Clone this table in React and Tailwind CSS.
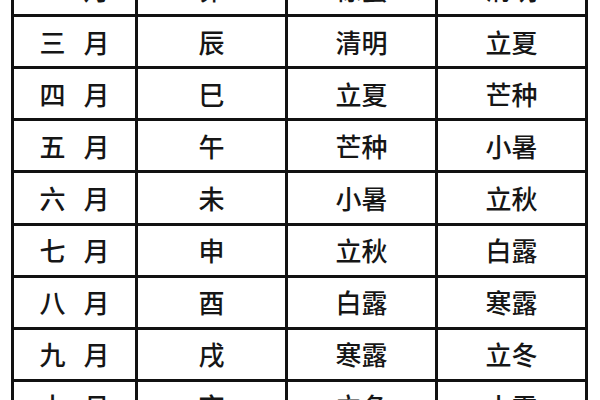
import React from "react";

const rows = [
  ["二", "卯", "惊蛰", "清明"],
  ["三", "辰", "清明", "立夏"],
  ["四", "巳", "立夏", "芒种"],
  ["五", "午", "芒种", "小暑"],
  ["六", "未", "小暑", "立秋"],
  ["七", "申", "立秋", "白露"],
  ["八", "酉", "白露", "寒露"],
  ["九", "戌", "寒露", "立冬"],
  ["十", "亥", "立冬", "小雪"],
];

export default function App() {
  return (
    <div
      className="w-[600px] h-[400px] overflow-hidden bg-white text-[#161616]"
      style={{ fontFamily: '"Noto Sans CJK SC", "Noto Sans", sans-serif' }}
    >
      <div className="ml-[11px] mt-[-35.14px] w-[577px] flex flex-col">
        {rows.map((r, i) => (
          <div key={i} className="flex w-[577px] h-[52.14px] border-b-[3px] border-[#111] text-[26px] leading-none font-medium">
            <div className="w-[127px] shrink-0 border-l-[3px] border-r-[3px] border-[#111] flex items-center justify-center gap-[18px]">
              <span>{r[0]}</span>
              <span>月</span>
            </div>
            <div className="w-[150px] shrink-0 border-r-[3px] border-[#111] flex items-center justify-center">
              {r[1]}
            </div>
            <div className="w-[150px] shrink-0 border-r-[3px] border-[#111] flex items-center justify-center">
              {r[2]}
            </div>
            <div className="w-[150px] shrink-0 border-r-[3px] border-[#111] flex items-center justify-center">
              {r[3]}
            </div>
          </div>
        ))}
      </div>
    </div>
  );
}
